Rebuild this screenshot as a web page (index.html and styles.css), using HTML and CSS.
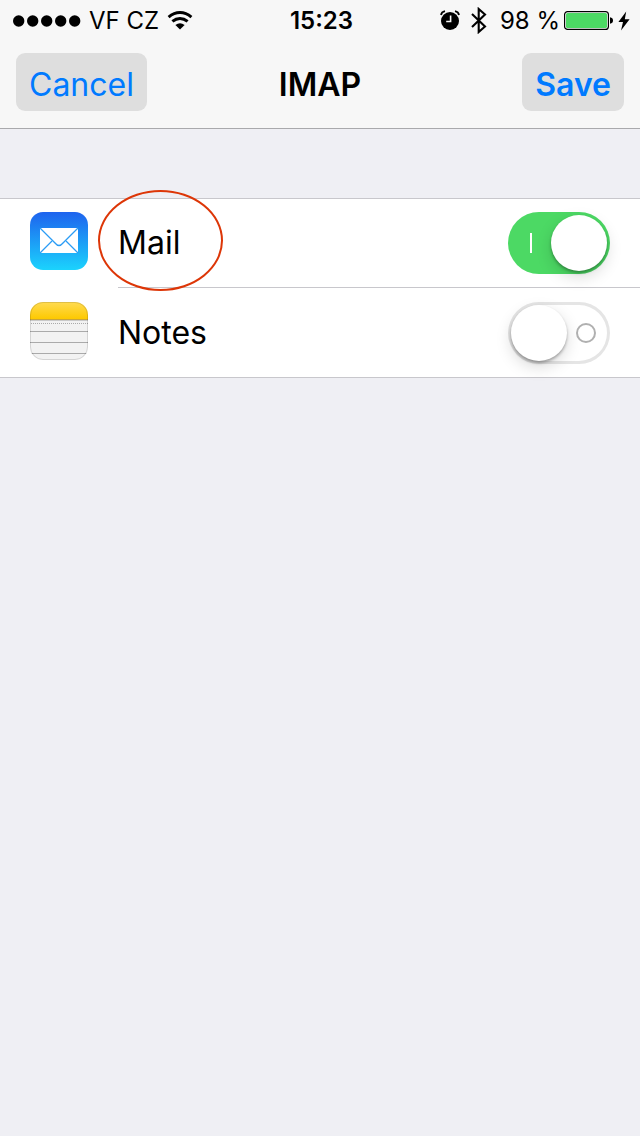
FILE: index.html
```html
<!DOCTYPE html>
<html lang="en">
<head>
<meta charset="utf-8">
<meta name="viewport" content="width=device-width">
<title>IMAP</title>
<link rel="stylesheet" href="styles.css">
</head>
<body>
<header class="top">
  <div class="status">
    <div class="status-left">
      <svg class="signal" width="68" height="12" viewBox="0 0 68 12" aria-hidden="true"><circle cx="5.7" cy="6" r="5.7"/><circle cx="19.7" cy="6" r="5.7"/><circle cx="33.7" cy="6" r="5.7"/><circle cx="47.7" cy="6" r="5.7"/><circle cx="61.7" cy="6" r="5.7"/></svg>
      <span>VF CZ</span>
      <svg class="wifi" width="26" height="19" viewBox="0 0 26 19" aria-hidden="true"><g fill="none" stroke="#000" stroke-width="3"><path d="M1.6 6.1Q7 1.6 13 1.6T24.4 6.1"/><path d="M5.4 10.4Q9 7.4 13 7.4T20.6 10.4"/></g><path d="M8.4 13.9Q13 10.4 17.6 13.9L13 18.4Z"/></svg>
    </div>
    <time class="clock">15:23</time>
    <div class="status-right">
      <svg width="20" height="21" viewBox="0 0 20 21" aria-hidden="true"><circle cx="10" cy="11" r="9"/><g fill="none" stroke="#000" stroke-width="1.8"><path d="M1 5Q1.5 2 5 1.2M19 5Q18.5 2 15 1.2"/></g><path d="M10.6 5.5V11.5H6.2" fill="none" stroke="#f7f7f7" stroke-width="1.6"/></svg>
      <svg class="bluetooth" width="18" height="27" viewBox="0 0 18 27" aria-hidden="true"><path d="M2 7L15 19.5L8.7 25V2L15 7.5L2 20" fill="none" stroke="#000" stroke-width="2.1"/></svg>
      <span class="percent">98 %</span>
      <svg class="battery" width="49" height="19" viewBox="0 0 49 19" aria-hidden="true"><rect x=".6" y=".6" width="43.8" height="17.8" rx="3" fill="#fff" stroke="#000" stroke-width="1.2"/><rect x="2" y="2" width="41" height="15" rx="1.6" fill="#4cd964"/><path d="M46 6.3Q49 6.8 49 9.5T46 12.7Z"/></svg>
      <svg class="bolt" width="12" height="20" viewBox="0 0 12 20" aria-hidden="true"><path d="M8.2 .5L.4 11H5L3 19.5L11.6 8.2H6.8Z"/></svg>
    </div>
  </div>
  <nav class="nav">
    <button class="nav-button" type="button">Cancel</button>
    <h1 class="title">IMAP</h1>
    <button class="nav-button save" type="button">Save</button>
  </nav>
</header>
<main class="list">
  <div class="row">
    <svg class="app-icon" width="58" height="58" viewBox="0 0 58 58" aria-hidden="true">
      <defs><linearGradient id="mail" x2="0" y2="1"><stop stop-color="#1e63ee"/><stop offset="1" stop-color="#1bd3fd"/></linearGradient></defs>
      <rect width="58" height="58" rx="13" fill="url(#mail)"/>
      <path d="M10 16H48V41H10Z" fill="#fff"/>
      <g fill="none" stroke="#2b9cf5" stroke-width="1.3"><path d="M10 16L25 31Q29 36 33 31L48 16"/><path d="M10 41L22 29M48 41L36 29"/></g>
    </svg>
    <div class="row-body">
      <label class="row-label marked" for="mail-switch">Mail</label>
      <input class="switch" id="mail-switch" type="checkbox" role="switch" checked>
    </div>
  </div>
  <div class="row">
    <svg class="app-icon" width="58" height="58" viewBox="0 0 58 58" aria-hidden="true">
      <defs><linearGradient id="notes" x2="0" y2="1"><stop stop-color="#ffdb52"/><stop offset="1" stop-color="#fdc900"/></linearGradient><clipPath id="tile"><rect width="58" height="58" rx="13"/></clipPath></defs>
      <g clip-path="url(#tile)"><rect width="58" height="58" fill="#f2f2f2"/><rect width="58" height="17" fill="url(#notes)"/><path d="M0 17.5H58" stroke="#c8a43b"/><path d="M0 18.5H58" stroke="#c9c9c9"/><path d="M1 21.5H58" stroke="#aaa" stroke-dasharray="1 1"/><path d="M0 29.5H58M0 40.5H58M0 51.5H58" stroke="#aaa"/></g>
      <rect x=".5" y=".5" width="57" height="57" rx="12.5" fill="none" stroke="#000" stroke-opacity=".12"/>
    </svg>
    <div class="row-body">
      <label class="row-label" for="notes-switch">Notes</label>
      <input class="switch" id="notes-switch" type="checkbox" role="switch">
    </div>
  </div>
</main>
</body>
</html>
```
FILE: styles.css
```css
*, *::before, *::after { box-sizing: border-box; }

body {
  margin: 0;
  min-height: 100vh;
  background: #efeff4;
  color: #000;
  font-family: Inter, "Liberation Sans", sans-serif;
  font-size: 32px;
}

svg { display: block; flex: none; }

.top {
  background: #f7f7f7;
  border-bottom: 1px solid #a9a9ac;
}

.status {
  display: grid;
  grid-template-columns: 1fr auto 1fr;
  align-items: center;
  height: 41px;
  padding: 0 10px 0 13px;
  font-size: 24px;
  line-height: 28px;
}

.status-left, .status-right { display: flex; align-items: center; }
.status-left { gap: 8px; }
.status-right { justify-content: flex-end; }
.bluetooth { margin-left: 10px; }
.percent { margin-left: 12px; }
.battery { margin-left: 4px; }
.bolt { margin-left: 5px; }
.clock { font-weight: 600; }

.nav {
  display: grid;
  grid-template-columns: 1fr auto 1fr;
  align-items: center;
  padding: 12px 16px 17px;
}

.nav-button {
  justify-self: start;
  height: 58px;
  padding: 4px 13px 0;
  border: 0;
  border-radius: 9px;
  background: #dedede;
  color: #007aff;
  font: inherit;
}

.save { justify-self: end; font-weight: 600; }

.title {
  margin: 0;
  padding-top: 4px;
  font-size: 32px;
  font-weight: 600;
}

.list {
  margin-top: 69px;
  background: #fff;
  box-shadow: inset 0 1px #c8c7cc, inset 0 -1px #c8c7cc;
}

.row { display: flex; height: 90px; padding-left: 30px; }
.app-icon { margin-top: 14px; }

.row-body {
  flex: 1;
  display: flex;
  align-items: flex-start;
  justify-content: space-between;
  margin-left: 30px;
  padding: 14px 30px 0 0;
}

.row:not(:last-child) .row-body { border-bottom: 1px solid #c8c7cc; }
.row-label { position: relative; line-height: 62px; }

.marked::after {
  content: "";
  position: absolute;
  top: -22px;
  left: -20px;
  width: 125px;
  height: 101px;
  border: 2px solid #dd3607;
  border-radius: 50%;
  pointer-events: none;
}

.switch {
  appearance: none;
  display: flex;
  align-items: center;
  width: 102px;
  height: 62px;
  margin: 0;
  padding: 0 14px 0 3px;
  border-radius: 31px;
  box-shadow: inset 0 0 0 3px #e5e5e5;
}

.switch::before {
  content: "";
  width: 56px;
  height: 56px;
  border-radius: 50%;
  background: #fff;
  box-shadow: 0 2px 3px rgba(0, 0, 0, .3), 0 6px 16px rgba(0, 0, 0, .15);
}

.switch::after {
  content: "";
  width: 20px;
  height: 20px;
  margin-left: auto;
  border: 2px solid #b0b0b0;
  border-radius: 50%;
}

.switch:checked {
  flex-direction: row-reverse;
  padding: 0 3px 0 22px;
  background: #4cd964;
  box-shadow: none;
}

.switch:checked::after {
  width: 2px;
  margin: 0 auto 0 0;
  border: 0;
  border-radius: 0;
  background: #fff;
}
```
